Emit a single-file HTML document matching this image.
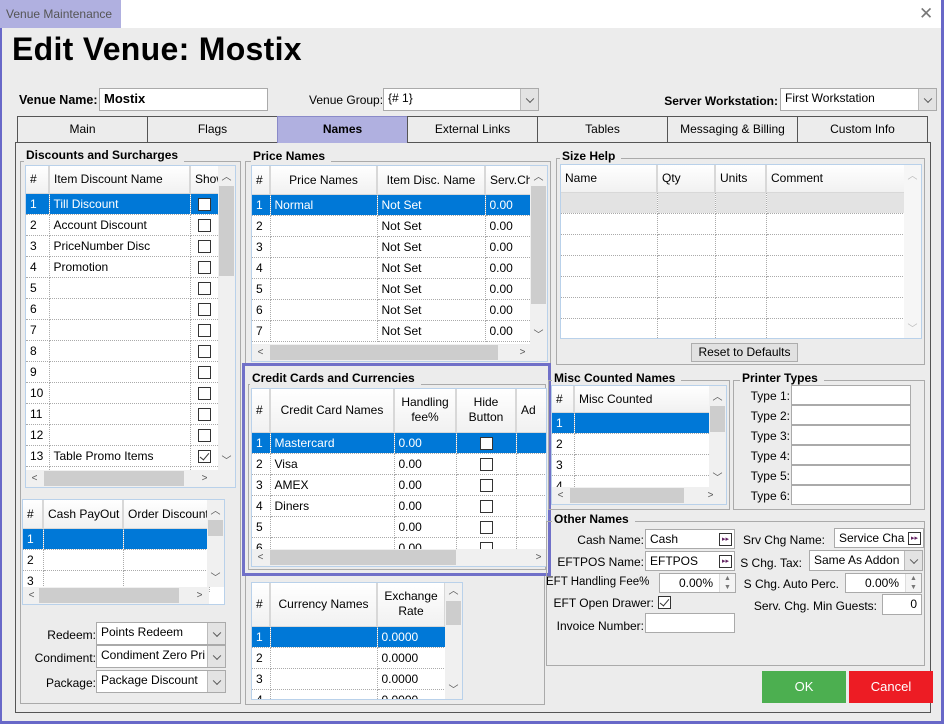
<!DOCTYPE html>
<html><head><meta charset="utf-8">
<style>
*{box-sizing:border-box;margin:0;padding:0}
body{width:944px;height:724px;overflow:hidden;font-family:"Liberation Sans",sans-serif;font-size:12px;color:#000;background:#6868c8;position:relative}
.a{position:absolute}
#win{position:absolute;left:2px;top:0;width:939px;height:721px;background:#ececec}
.tb{position:absolute;left:0;top:0;width:939px;height:28px;background:#fff}
.inp{position:absolute;background:#fff;border:1px solid #aaa;padding:2px 4px;white-space:nowrap;overflow:hidden}
.cb{position:absolute;background:#fff;border:1px solid #aaa;padding:2px 4px;white-space:nowrap;overflow:hidden}
.cb:after{content:"";position:absolute;right:0;top:0;bottom:0;width:17px;background:#e3e3e3;border-left:1px solid #bbb}
.cb i{position:absolute;right:5px;top:50%;width:6px;height:6px;border-right:1px solid #555;border-bottom:1px solid #555;transform:translateY(-70%) rotate(45deg);z-index:2}
.tab{position:absolute;top:116px;height:27px;border:1px solid #555;border-bottom:none;text-align:center;line-height:25px;font-size:12px;background:#ececec}
.grp{position:absolute;border:1px solid #aaa;}
.gt{position:absolute;font-weight:bold;background:#ececec;padding:0 6px 0 2px;font-size:12px}
.g{position:absolute;border:1px solid #b9d1ea;background:#fff;overflow:hidden}
.g table{border-collapse:collapse;table-layout:fixed;position:absolute;left:0;top:0}
.g th{font-weight:normal;background:linear-gradient(#fff,#f1f1f1);border-right:2px solid #d8d8d8;border-bottom:1px solid #d8d8d8;padding:0 4px;white-space:nowrap;overflow:hidden;text-align:left}
.g td{height:21px;border-right:1px dotted #aaa;border-bottom:1px dotted #aaa;padding:0 4px;white-space:nowrap;overflow:hidden}
.g tr.s td{background:#0078d7;color:#fff}
.g tr.gr td{background:#e3e3e3}
.c{text-align:center!important}
.chk{display:inline-block;width:13px;height:13px;border:1px solid #333;background:#fff;vertical-align:middle;position:relative}
.chk.on:after{content:"";position:absolute;left:3px;top:0px;width:4px;height:8px;border-right:1px solid #333;border-bottom:1px solid #333;transform:rotate(40deg)}
.vs{position:absolute;top:0;right:0;width:17px;bottom:0;background:#f0f0f0}
.vs b{position:absolute;left:1px;right:1px;background:#cdcdcd}
.hs{position:absolute;left:0;height:17px;bottom:0;background:#f0f0f0}
.hs b{position:absolute;top:1px;bottom:1px;background:#cdcdcd}
.ar{position:absolute;font-size:10px;color:#555;width:17px;text-align:center;line-height:17px}
.lbl{position:absolute;white-space:nowrap}
.rl{position:absolute;white-space:nowrap;text-align:right}
.r{text-align:right}
.btn{position:absolute;color:#fff;text-align:center;font-size:13px}
.ff{position:absolute;right:2px;top:3px;width:13px;height:13px;border:1px solid #333;font-size:7px;line-height:11px;text-align:center;color:#602060}
.spin{position:absolute;right:0;top:0;bottom:0;width:16px;background:#f4f4f4;border-left:1px solid #ddd;font-size:7px;color:#777;text-align:center;line-height:9px}
</style></head><body>
<div id="win">
<div class="tb"></div>
<div class="a" style="left:-2px;top:0;width:121px;height:28px;background:#b0b0e0;color:#555;padding:7px 0 0 6px;font-size:12px">Venue Maintenance</div>
<div class="a" style="left:917px;top:4px;font-size:17px;color:#777">✕</div>
<div class="a" style="left:10px;top:31px;font-size:32px;font-weight:bold;letter-spacing:0.3px">Edit Venue: Mostix</div>

<div class="lbl" style="left:17px;top:93px;font-weight:bold;font-size:12.5px">Venue Name:</div>
<div class="inp" style="left:97px;top:88px;width:169px;height:23px;font-weight:bold;font-size:13px">Mostix</div>
<div class="lbl" style="left:307px;top:93px">Venue Group:</div>
<div class="cb" style="left:381px;top:88px;width:156px;height:23px">{# 1}<i></i></div>
<div class="rl" style="right:163px;top:94px;font-weight:bold;font-size:12px">Server Workstation:</div>
<div class="cb" style="left:778px;top:88px;width:157px;height:23px">First Workstation<i></i></div>

<div class="tab" style="left:15px;width:131px">Main</div>
<div class="tab" style="left:145px;width:131px">Flags</div>
<div class="tab" style="left:275px;width:131px;background:#b0b0e0;font-weight:bold;border-color:#8a8ac8">Names</div>
<div class="tab" style="left:405px;width:131px">External Links</div>
<div class="tab" style="left:535px;width:131px">Tables</div>
<div class="tab" style="left:665px;width:131px">Messaging &amp; Billing</div>
<div class="tab" style="left:795px;width:131px">Custom Info</div>
<div class="a" style="left:13px;top:142px;width:916px;height:571px;border:1px solid #555;border-top:none"></div>
<div class="a" style="left:13px;top:142px;width:262px;height:1px;background:#555"></div>
<div class="a" style="left:406px;top:142px;width:523px;height:1px;background:#555"></div>

<!-- Discounts group -->
<div class="grp" style="left:18px;top:161px;width:221px;height:543px"></div>
<div class="gt" style="left:22px;top:148px">Discounts and Surcharges</div>
<div class="g" style="left:23px;top:165px;width:211px;height:323px">
<table style="width:193px"><colgroup><col style="width:23px"><col style="width:141px"><col style="width:29px"></colgroup>
<tr><th style="height:27px">#</th><th>Item Discount Name</th><th>Show</th></tr>
<tr class="s"><td>1</td><td>Till Discount</td><td class="c"><span class="chk"></span></td></tr>
<tr><td>2</td><td>Account Discount</td><td class="c"><span class="chk"></span></td></tr>
<tr><td>3</td><td>PriceNumber Disc</td><td class="c"><span class="chk"></span></td></tr>
<tr><td>4</td><td>Promotion</td><td class="c"><span class="chk"></span></td></tr>
<tr><td>5</td><td></td><td class="c"><span class="chk"></span></td></tr>
<tr><td>6</td><td></td><td class="c"><span class="chk"></span></td></tr>
<tr><td>7</td><td></td><td class="c"><span class="chk"></span></td></tr>
<tr><td>8</td><td></td><td class="c"><span class="chk"></span></td></tr>
<tr><td>9</td><td></td><td class="c"><span class="chk"></span></td></tr>
<tr><td>10</td><td></td><td class="c"><span class="chk"></span></td></tr>
<tr><td>11</td><td></td><td class="c"><span class="chk"></span></td></tr>
<tr><td>12</td><td></td><td class="c"><span class="chk"></span></td></tr>
<tr><td>13</td><td>Table Promo Items</td><td class="c"><span class="chk on"></span></td></tr>
<tr><td>14</td><td></td><td></td></tr>
</table>
<div class="vs" style="bottom:17px"><span class="ar" style="top:3px">︿</span><b style="top:20px;height:90px"></b><span class="ar" style="bottom:0">﹀</span></div>
<div class="hs" style="width:194px"><span class="ar" style="left:0">&lt;</span><b style="left:18px;width:140px"></b><span class="ar" style="left:170px">&gt;</span></div>
<div class="a" style="right:0;bottom:0;width:17px;height:17px;background:#f0f0f0"></div>
</div>

<div class="g" style="left:20px;top:499px;width:203px;height:106px">
<table style="width:186px"><colgroup><col style="width:20px"><col style="width:80px"><col style="width:86px"></colgroup>
<tr><th style="height:28px">#</th><th>Cash PayOut</th><th>Order Discount</th></tr>
<tr class="s"><td>1</td><td></td><td></td></tr>
<tr><td>2</td><td></td><td></td></tr>
<tr><td>3</td><td></td><td></td></tr>
</table>
<div class="vs" style="bottom:17px"><span class="ar" style="top:3px">︿</span><b style="top:20px;height:16px"></b><span class="ar" style="bottom:0">﹀</span></div>
<div class="hs" style="width:186px"><span class="ar" style="left:0">&lt;</span><b style="left:16px;width:140px"></b><span class="ar" style="left:168px">&gt;</span></div>
</div>

<div class="lbl r" style="left:20px;width:74px;top:628px">Redeem:</div>
<div class="cb" style="left:94px;top:622px;width:130px;height:23px">Points Redeem<i></i></div>
<div class="lbl r" style="left:20px;width:74px;top:651px">Condiment:</div>
<div class="cb" style="left:94px;top:645px;width:130px;height:23px">Condiment Zero Pri<i></i></div>
<div class="lbl r" style="left:20px;width:74px;top:676px">Package:</div>
<div class="cb" style="left:94px;top:670px;width:130px;height:23px">Package Discount<i></i></div>

<!-- Price names -->
<div class="grp" style="left:243px;top:161px;width:306px;height:204px"></div>
<div class="gt" style="left:249px;top:149px">Price Names</div>
<div class="g" style="left:249px;top:165px;width:297px;height:197px">
<table style="width:279px"><colgroup><col style="width:18px"><col style="width:107px"><col style="width:108px"><col style="width:46px"></colgroup>
<tr><th style="height:28px">#</th><th class="c">Price Names</th><th class="c">Item Disc. Name</th><th>Serv.Chg</th></tr>
<tr class="s"><td>1</td><td>Normal</td><td>Not Set</td><td>0.00</td></tr>
<tr><td>2</td><td></td><td>Not Set</td><td>0.00</td></tr>
<tr><td>3</td><td></td><td>Not Set</td><td>0.00</td></tr>
<tr><td>4</td><td></td><td>Not Set</td><td>0.00</td></tr>
<tr><td>5</td><td></td><td>Not Set</td><td>0.00</td></tr>
<tr><td>6</td><td></td><td>Not Set</td><td>0.00</td></tr>
<tr><td>7</td><td></td><td>Not Set</td><td>0.00</td></tr>
</table>
<div class="vs" style="bottom:17px"><span class="ar" style="top:3px">︿</span><b style="top:20px;height:118px"></b><span class="ar" style="bottom:0">﹀</span></div>
<div class="hs" style="width:296px"><span class="ar" style="left:0">&lt;</span><b style="left:18px;width:228px"></b><span class="ar" style="left:262px">&gt;</span></div>
</div>

<!-- lower middle group -->
<div class="grp" style="left:243px;top:370px;width:300px;height:335px"></div>
<!-- Credit cards highlight -->
<div class="a" style="left:240px;top:363px;width:309px;height:213px;border:3px solid #7070c8;background:#ececec"></div>
<div class="grp" style="left:246px;top:384px;width:298px;height:186px"></div>
<div class="gt" style="left:248px;top:371px">Credit Cards and Currencies</div>
<div class="g" style="left:249px;top:388px;width:296px;height:179px">
<table style="width:300px"><colgroup><col style="width:18px"><col style="width:124px"><col style="width:62px"><col style="width:60px"><col style="width:36px"></colgroup>
<tr><th style="height:43px">#</th><th class="c">Credit Card Names</th><th class="c" style="white-space:normal;line-height:15px">Handling fee%</th><th class="c" style="white-space:normal;line-height:15px">Hide Button</th><th>Ad</th></tr>
<tr class="s"><td>1</td><td>Mastercard</td><td>0.00</td><td class="c"><span class="chk"></span></td><td></td></tr>
<tr><td>2</td><td>Visa</td><td>0.00</td><td class="c"><span class="chk"></span></td><td></td></tr>
<tr><td>3</td><td>AMEX</td><td>0.00</td><td class="c"><span class="chk"></span></td><td></td></tr>
<tr><td>4</td><td>Diners</td><td>0.00</td><td class="c"><span class="chk"></span></td><td></td></tr>
<tr><td>5</td><td></td><td>0.00</td><td class="c"><span class="chk"></span></td><td></td></tr>
<tr><td>6</td><td></td><td>0.00</td><td class="c"><span class="chk"></span></td><td></td></tr>
</table>
<div class="hs" style="width:296px"><span class="ar" style="left:0">&lt;</span><b style="left:18px;width:186px"></b><span class="ar" style="left:278px">&gt;</span></div>
</div>

<div class="g" style="left:249px;top:582px;width:212px;height:118px">
<table style="width:193px"><colgroup><col style="width:18px"><col style="width:107px"><col style="width:68px"></colgroup>
<tr><th style="height:43px">#</th><th class="c">Currency Names</th><th class="c" style="white-space:normal;line-height:15px">Exchange Rate</th></tr>
<tr class="s"><td>1</td><td></td><td>0.0000</td></tr>
<tr><td>2</td><td></td><td>0.0000</td></tr>
<tr><td>3</td><td></td><td>0.0000</td></tr>
<tr><td>4</td><td></td><td>0.0000</td></tr>
</table>
<div class="vs"><span class="ar" style="top:0">︿</span><b style="top:18px;height:24px"></b><span class="ar" style="bottom:0">﹀</span></div>
</div>

<!-- Size help -->
<div class="grp" style="left:554px;top:158px;width:369px;height:207px"></div>
<div class="gt" style="left:558px;top:149px">Size Help</div>
<div class="g" style="left:558px;top:164px;width:362px;height:175px">
<table style="width:345px"><colgroup><col style="width:96px"><col style="width:58px"><col style="width:51px"><col style="width:140px"></colgroup>
<tr><th style="height:27px">Name</th><th>Qty</th><th>Units</th><th>Comment</th></tr>
<tr class="gr"><td></td><td></td><td></td><td></td></tr>
<tr><td></td><td></td><td></td><td></td></tr>
<tr><td></td><td></td><td></td><td></td></tr>
<tr><td></td><td></td><td></td><td></td></tr>
<tr><td></td><td></td><td></td><td></td></tr>
<tr><td></td><td></td><td></td><td></td></tr>
<tr><td></td><td></td><td></td><td></td></tr>
</table>
<div class="vs" style="background:#f6f6f6"><span class="ar" style="top:3px;color:#bbb">︿</span><span class="ar" style="bottom:0;color:#bbb">﹀</span></div>
</div>
<div class="a" style="left:689px;top:343px;width:107px;height:19px;border:1px solid #adadad;background:#e1e1e1;text-align:center;line-height:16px">Reset to Defaults</div>

<!-- Misc counted -->
<div class="grp" style="left:546px;top:380px;width:182px;height:130px"></div>
<div class="gt" style="left:550px;top:371px">Misc Counted Names</div>
<div class="g" style="left:549px;top:385px;width:176px;height:120px">
<table style="width:158px"><colgroup><col style="width:22px"><col style="width:136px"></colgroup>
<tr><th style="height:26px">#</th><th>Misc Counted</th></tr>
<tr class="s"><td>1</td><td></td></tr>
<tr><td>2</td><td></td></tr>
<tr><td>3</td><td></td></tr>
<tr><td>4</td><td></td></tr>
</table>
<div class="vs" style="bottom:17px"><span class="ar" style="top:3px">︿</span><b style="top:20px;height:26px"></b><span class="ar" style="bottom:0">﹀</span></div>
<div class="hs" style="width:176px"><span class="ar" style="left:0">&lt;</span><b style="left:18px;width:114px"></b><span class="ar" style="left:150px">&gt;</span></div>
</div>

<!-- Printer types -->
<div class="grp" style="left:731px;top:380px;width:192px;height:130px"></div>
<div class="gt" style="left:738px;top:371px">Printer Types</div>
<div class="lbl r" style="left:740px;width:48px;top:389px">Type 1:</div><div class="inp" style="left:789px;top:385px;width:120px;height:20px"></div>
<div class="lbl r" style="left:740px;width:48px;top:409px">Type 2:</div><div class="inp" style="left:789px;top:405px;width:120px;height:20px"></div>
<div class="lbl r" style="left:740px;width:48px;top:429px">Type 3:</div><div class="inp" style="left:789px;top:425px;width:120px;height:20px"></div>
<div class="lbl r" style="left:740px;width:48px;top:449px">Type 4:</div><div class="inp" style="left:789px;top:445px;width:120px;height:20px"></div>
<div class="lbl r" style="left:740px;width:48px;top:469px">Type 5:</div><div class="inp" style="left:789px;top:465px;width:120px;height:20px"></div>
<div class="lbl r" style="left:740px;width:48px;top:489px">Type 6:</div><div class="inp" style="left:789px;top:485px;width:120px;height:20px"></div>

<!-- Other names -->
<div class="grp" style="left:544px;top:521px;width:379px;height:145px"></div>
<div class="gt" style="left:550px;top:512px">Other Names</div>
<div class="rl" style="right:297px;top:533px">Cash Name:</div>
<div class="inp" style="left:643px;top:529px;width:90px;height:20px;padding-top:2px">Cash<span class="ff">▸▸</span></div>
<div class="rl" style="right:297px;top:555px">EFTPOS Name:</div>
<div class="inp" style="left:643px;top:551px;width:90px;height:20px;padding-top:2px">EFTPOS<span class="ff">▸▸</span></div>
<div class="lbl" style="left:544px;top:576px;font-size:11.5px">EFT Handling Fee%</div>
<div class="inp r" style="left:657px;top:573px;width:77px;height:20px;padding-right:22px">0.00%<span class="spin">▲<br>▼</span></div>
<div class="rl" style="right:287px;top:596px">EFT Open Drawer:</div>
<span class="chk on a" style="left:656px;top:595px"></span>
<div class="rl" style="right:297px;top:619px">Invoice Number:</div>
<div class="inp" style="left:643px;top:613px;width:90px;height:20px"></div>

<div class="rl" style="right:116px;top:533px">Srv Chg Name:</div>
<div class="inp" style="left:832px;top:528px;width:90px;height:20px;padding-top:2px">Service Cha<span class="ff">▸▸</span></div>
<div class="rl" style="right:139px;top:556px">S Chg. Tax:</div>
<div class="cb" style="left:807px;top:550px;width:114px;height:21px;padding-top:2px">Same As Addon<i></i></div>
<div class="rl" style="right:102px;top:577px">S Chg. Auto Perc.</div>
<div class="inp r" style="left:843px;top:573px;width:77px;height:20px;padding-right:22px">0.00%<span class="spin">▲<br>▼</span></div>
<div class="rl" style="right:64px;top:599px">Serv. Chg. Min Guests:</div>
<div class="inp r" style="left:880px;top:594px;width:40px;height:21px">0</div>

<div class="btn" style="left:760px;top:671px;width:84px;height:32px;background:#4caf50;line-height:32px">OK</div>
<div class="btn" style="left:847px;top:671px;width:84px;height:32px;background:#ed1c24;line-height:32px">Cancel</div>
</div>
</body></html>
